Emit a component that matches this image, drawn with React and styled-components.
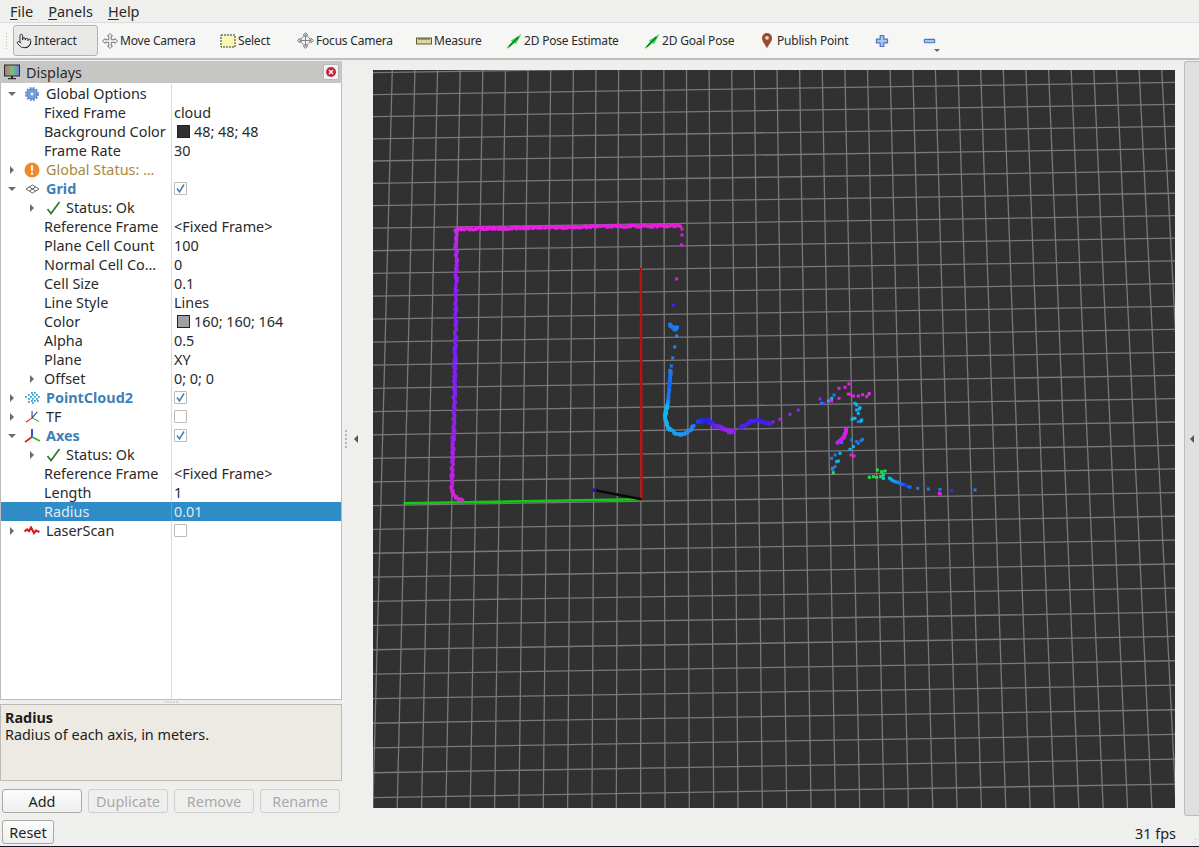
import React from "react";
import styled, { createGlobalStyle } from "styled-components";
import { Pointer } from "lucide-react";

const GlobalStyle = createGlobalStyle`
  html, body { margin: 0; padding: 0; background: #efefef; }
  body { font-family: "Noto Sans", "Open Sans", sans-serif; font-size: 14.4px; color: #2a2a2a; }
`;

const Window = styled.div`
  width: 1199px;
  height: 847px;
  display: flex;
  flex-direction: column;
  overflow: hidden;
  background: #efefee;
`;

const MenuBar = styled.div`
  height: 22px;
  display: flex;
  align-items: center;
  padding-left: 10px;
  gap: 15px;
  font-size: 14.5px;
  flex: none;
  u { text-underline-offset: 2px; }
`;

const Toolbar = styled.div`
  height: 38px;
  flex: none;
  box-sizing: border-box;
  display: flex;
  align-items: center;
  padding-left: 13px;
  background: #f6f6f5;
  border-top: 1px solid #dcdcdc;
  border-bottom: 2px solid #bdbdbd;
  position: relative;
  font-size: 12px;
  letter-spacing: -0.2px;
`;

const Grip = styled.div`
  position: absolute;
  left: 5px;
  top: 9px;
  width: 4px;
  height: 19px;
  background-image: radial-gradient(#b5b5b5 0.7px, transparent 0.8px);
  background-size: 3px 3px;
`;

const ToolButton = styled.div`
  width: ${(p) => p.$w}px;
  height: 31px;
  flex: none;
  box-sizing: border-box;
  display: flex;
  align-items: center;
  gap: 2px;
  padding-left: ${(p) => (p.$active ? 2 : 3)}px;
  white-space: nowrap;
  border: 1px solid ${(p) => (p.$active ? "#b2b2b2" : "transparent")};
  border-radius: 3px;
  background: ${(p) => (p.$active ? "#e9e9e8" : "transparent")};
`;

const MoreArrow = styled.div`
  width: 0;
  height: 0;
  margin: 20px 0 0 -4px;
  border-left: 3px solid transparent;
  border-right: 3px solid transparent;
  border-top: 3px solid #666;
`;

const Main = styled.div`
  flex: 1;
  min-height: 0;
  display: flex;
  padding-top: 1px;
`;

const Dock = styled.div`
  width: 342px;
  flex: none;
  display: flex;
  flex-direction: column;
`;

const DockTitle = styled.div`
  height: 22px;
  flex: none;
  display: flex;
  align-items: center;
  padding: 0 3px 0 4px;
  gap: 6px;
  background: #c6c6c5;
`;

const CloseButton = styled.div`
  margin-left: auto;
  width: 16px;
  height: 16px;
  box-sizing: border-box;
  display: flex;
  align-items: center;
  justify-content: center;
  background: #f4f4f4;
  border: 1px solid #b8b8b8;
  border-radius: 2px;
`;

const Tree = styled.div`
  height: 617px;
  flex: none;
  box-sizing: border-box;
  display: flex;
  flex-direction: column;
  background: #fff;
  border: 1px solid #bcbcbc;
  border-top: 0;
  padding-top: 1px;
`;

const Row = styled.div`
  height: 19px;
  flex: none;
  display: grid;
  grid-template-columns: 171px 1fr;
  background: ${(p) => (p.$selected ? "#308cc6" : "transparent")};
  color: ${(p) => (p.$selected ? "#dfeaf4" : "#2a2a2a")};
`;

const NameCell = styled.div`
  display: flex;
  align-items: center;
  box-sizing: border-box;
  padding-left: ${(p) => p.$indent}px;
  border-right: 1px solid ${(p) => (p.$selected ? "#5aa3d2" : "#dcdcdc")};
  white-space: nowrap;
  overflow: hidden;
`;

const ValueCell = styled.div`
  display: flex;
  align-items: center;
  padding-left: 2px;
  white-space: nowrap;
`;

const Filler = styled.div`
  flex: 1;
  width: 171px;
  box-sizing: border-box;
  border-right: 1px solid #dcdcdc;
`;

const ArrowSlot = styled.div`
  width: ${(p) => p.$w}px;
  flex: none;
  display: flex;
  justify-content: center;
`;

const Caret = styled.div`
  width: 0;
  height: 0;
  ${(p) =>
    p.$open
      ? `border-left: 4px solid transparent; border-right: 4px solid transparent; border-top: 4px solid #6c6c6c;`
      : `border-top: 4px solid transparent; border-bottom: 4px solid transparent; border-left: 4px solid #6c6c6c;`}
`;

const IconSlot = styled.div`
  width: ${(p) => p.$w}px;
  margin-left: ${(p) => p.$ml}px;
  flex: none;
  display: flex;
  align-items: center;
  justify-content: center;
`;

const Label = styled.span`
  margin-left: ${(p) => p.$ml || 0}px;
  font-weight: ${(p) => (p.$bold ? 700 : 400)};
  color: ${(p) => p.$color || "inherit"};
`;

const Check = styled.div`
  width: 13px;
  height: 13px;
  box-sizing: border-box;
  border: 1px solid #bababa;
  border-radius: 1px;
  display: flex;
  align-items: center;
  justify-content: center;
  background: #fff;
`;

const Swatch = styled.div`
  width: 13px;
  height: 13px;
  margin: 0 4px 0 3px;
  box-sizing: border-box;
  border: 1px solid #222;
  background: ${(p) => p.$c};
`;

const Splitter = styled.div`
  height: 4px;
  flex: none;
  background-image: radial-gradient(#b8b8b8 0.6px, transparent 0.7px);
  background-size: 3px 4px;
  background-position: center;
  background-repeat: repeat-x;
  background-clip: content-box;
  padding: 0 163px;
`;

const Description = styled.div`
  height: 77px;
  flex: none;
  box-sizing: border-box;
  padding: 4px 4px;
  background: #ede9e3;
  border: 1px solid #bcbab6;
  line-height: 17px;
  color: #1d1d1d;
  b { display: block; }
`;

const ButtonRow = styled.div`
  display: flex;
  gap: 6px;
  padding: 8px 2px 0;
`;

const PushButton = styled.div`
  width: ${(p) => p.$w}px;
  height: 24px;
  box-sizing: border-box;
  display: flex;
  align-items: center;
  justify-content: center;
  border: 1px solid ${(p) => (p.$disabled ? "#cfcfcf" : "#a8a8a8")};
  border-radius: 3px;
  background: ${(p) => (p.$disabled ? "#efefee" : "linear-gradient(#fbfbfb, #efefef)")};
  color: ${(p) => (p.$disabled ? "#a9a9a9" : "#1d1d1d")};
`;

const CollapseGutter = styled.div`
  width: 31px;
  flex: none;
  display: flex;
  align-items: center;
  gap: 7px;
  padding-left: 3px;
  box-sizing: border-box;
`;

const GutterDots = styled.div`
  width: 2px;
  height: 20px;
  background-image: radial-gradient(#b5b5b5 0.7px, transparent 0.8px);
  background-size: 2px 4px;
`;

const LeftArrow = styled.div`
  width: 0;
  height: 0;
  border-top: 4px solid transparent;
  border-bottom: 4px solid transparent;
  border-right: 4px solid #555;
`;

const Viewport = styled.svg`
  width: 802px;
  height: 738px;
  flex: none;
  margin-top: 9px;
  display: block;
  background: #313131;
`;

const RightHandle = styled.div`
  width: 15px;
  flex: none;
  margin-left: 9px;
  box-sizing: border-box;
  display: flex;
  align-items: center;
  justify-content: center;
  background: #dfdfde;
  border: 1px solid #bcbcbc;
  border-right: 0;
  border-radius: 3px 0 0 3px;
`;

const StatusBar = styled.div`
  height: 31px;
  flex: none;
  box-sizing: border-box;
  display: flex;
  align-items: flex-start;
  padding: 4px 0 0 2px;
  border-bottom: 1px solid #1d0f1d;
  position: relative;
`;

const Fps = styled.div`
  margin-left: auto;
  margin-right: 23px;
  margin-top: 4px;
  color: #1d1d1d;
`;

const SizeGrip = styled.div`
  position: absolute;
  right: 1px;
  bottom: 1px;
  width: 10px;
  height: 10px;
  background-image: radial-gradient(#c2c2c2 0.8px, transparent 0.9px);
  background-size: 3px 3px;
  clip-path: polygon(100% 0, 100% 100%, 0 100%);
`;

/* toolbar icons */
const HandIcon = () => <Pointer size={16} strokeWidth={1.4} color="#222" />;

const MoveIcon = () => (
  <svg width="16" height="16" viewBox="0 0 16 16">
    <path
      d="M8 .5 10.5 3H9.3v3.7H13V5.5L15.5 8 13 10.5V9.3H9.3V13h1.2L8 15.500 5.500 13h1.200V9.300H3v1.200L.5 8 3 5.500v1.200h3.700V3H5.500z"
      fill="#f2f2f2"
      stroke="#7a7a7a"
      strokeWidth="1"
    />
  </svg>
);

const SelectIcon = () => (
  <svg width="16" height="16" viewBox="0 0 16 16">
    <rect x="1" y="2" width="14" height="12" fill="#fbf8b4" stroke="#333" strokeDasharray="2 1" />
  </svg>
);

const FocusIcon = () => (
  <svg width="17" height="17" viewBox="0 0 17 17" fill="none" stroke="#858585">
    <path d="M8.500 .5 11 3H6zM8.500 16.500 11 14H6zM.5 8.500 3 6v5zM16.500 8.500 14 6v5z" fill="#e8e8e8" />
    <circle cx="8.500" cy="8.500" r="4.500" fill="#f2f2f2" />
    <path d="M8.500 3v11M3 8.500h11" />
  </svg>
);

const MeasureIcon = () => (
  <svg width="16" height="16" viewBox="0 0 16 16">
    <rect x=".5" y="5" width="15" height="6" fill="#dcd89a" stroke="#5c5a3c" />
    <path d="M3 5v2M5 5v2M7 5v2M9 5v2M11 5v2M13 5v2" stroke="#5c5a3c" />
  </svg>
);

const PoseIcon = () => (
  <svg width="16" height="16" viewBox="0 0 16 16">
    <path d="M.5 15 6 9 5 7.500 15.500 1 10 11 8.500 10 2 15.500z" fill="#39d353" />
    <path d="M3 13.500 12.500 4" stroke="#116b2a" strokeWidth="1.300" />
  </svg>
);

const PinIcon = () => (
  <svg width="16" height="17" viewBox="0 0 16 17">
    <path d="M8 16.500C6.500 12.500 3 10 3 6a5 5 0 0 1 10 0c0 4-3.500 6.500-5 10.500z" fill="#9c4a2c" />
    <circle cx="8" cy="5.800" r="1.900" fill="#e8d8cc" />
  </svg>
);

const PlusIcon = () => (
  <svg width="16" height="16" viewBox="0 0 16 16">
    <path
      d="M6.200 2.500h3.600v3.700h3.700v3.600H9.800v3.700H6.200V9.800H2.500V6.200h3.700z"
      fill="#a9c5ee"
      stroke="#4b77b6"
      strokeWidth="1.200"
      strokeLinejoin="round"
    />
  </svg>
);

const MinusIcon = () => (
  <svg width="16" height="16" viewBox="0 0 16 16">
    <rect x="2.500" y="6.200" width="11" height="3.600" rx=".8" fill="#a9c5ee" stroke="#4b77b6" strokeWidth="1.200" />
  </svg>
);

/* tree icons */
const MonitorIcon = () => (
  <svg width="16" height="16" viewBox="0 0 16 16">
    <defs>
      <linearGradient id="screen" x1="0" x2="1" y1="0" y2="0">
        <stop offset="0" stopColor="#c46a78" />
        <stop offset=".5" stopColor="#79c07c" />
        <stop offset="1" stopColor="#6c7fd0" />
      </linearGradient>
    </defs>
    <rect x=".5" y="1" width="15" height="11" fill="url(#screen)" stroke="#2b2b2b" />
    <path d="M7 12h2v2H7zM4 14h8v1.200H4z" fill="#2b2b2b" />
  </svg>
);

const CloseIcon = () => (
  <svg width="12" height="12" viewBox="0 0 12 12">
    <circle cx="6" cy="6" r="5" fill="#c0233f" />
    <path d="M4 4l4 4M8 4l-4 4" stroke="#fff" strokeWidth="1.300" />
  </svg>
);

const GearIcon = () => (
  <svg width="14" height="14" viewBox="0 0 14 14">
    <circle cx="7" cy="7" r="5" fill="#7ba4dd" stroke="#4c7cc0" strokeWidth="1" />
    <circle cx="7" cy="7" r="6" fill="none" stroke="#5f8fd2" strokeWidth="2" strokeDasharray="1.900 1.240" />
    <circle cx="7" cy="7" r="2.200" fill="#dfeafa" stroke="#4c7cc0" strokeWidth=".8" />
  </svg>
);

const WarnIcon = () => (
  <svg width="16" height="16" viewBox="0 0 16 16">
    <circle cx="8" cy="8" r="7.500" fill="#f08a2c" />
    <rect x="7" y="3" width="2" height="6.500" rx=".8" fill="#fff4e6" />
    <circle cx="8" cy="11.800" r="1.200" fill="#fff4e6" />
  </svg>
);

const GridIcon = () => (
  <svg width="15" height="10" viewBox="0 0 15 10" fill="none" stroke="#555" strokeWidth=".9">
    <path d="M7.500 1 14 5 7.500 9 1 5zM4.200 3l6.500 4M10.800 3 4.300 7" />
  </svg>
);

const OkIcon = () => (
  <svg width="15" height="14" viewBox="0 0 15 14" fill="none">
    <path d="M1.500 8 5 12.500 13.500 1" stroke="#2f7d32" strokeWidth="1.800" />
  </svg>
);

const CloudIcon = () => (
  <svg width="15" height="14" viewBox="0 0 15 14" fill="#36a3d9">
    {[[6, 1], [9, 1], [3, 3], [7, 3], [11, 3], [0, 5], [5, 5], [9, 5], [13, 5], [3, 7], [7, 7], [11, 7], [6, 9], [9, 9], [12, 9], [7, 11], [3, 10]].map(([x, y]) => (
      <rect key={`${x}-${y}`} x={x} y={y} width="1.800" height="1.800" />
    ))}
  </svg>
);

const AxesIcon = ({ small }) => (
  <svg width={small ? 15 : 17} height={small ? 14 : 16} viewBox="0 0 17 16" fill="none" strokeWidth={small ? 1.200 : 1.800}>
    <path d="M8 9V1" stroke="#2436d8" />
    <path d="M8 9 1 14" stroke="#d92323" />
    <path d="M8 9l8 4" stroke={small ? "#2aa52a" : "#28b828"} />
    {small && <path d="M8 9l6-7" stroke="#333" />}
  </svg>
);

const LaserIcon = () => (
  <svg width="16" height="10" viewBox="0 0 16 10" fill="none">
    <path d="M.5 5.500 3 3.500l2 1.500 2-3.500 3 5.500 2-2.500 3.500 1.500" stroke="#d81f1f" strokeWidth="2.200" />
  </svg>
);

const TickIcon = () => (
  <svg width="11" height="11" viewBox="0 0 11 11" fill="none">
    <path d="M2 5.500 4.500 9 9 1.500" stroke="#3f7fb3" strokeWidth="1.500" />
  </svg>
);

const BLUE = "#3f7fb5";

const rows = [
  { kind: "group", open: true, icon: <GearIcon />, label: "Global Options" },
  { label: "Fixed Frame", value: "cloud" },
  { label: "Background Color", swatch: "#303030", value: "48; 48; 48" },
  { label: "Frame Rate", value: "30" },
  { kind: "group", icon: <WarnIcon />, label: "Global Status: …", color: "#a68a3c" },
  { kind: "group", open: true, icon: <GridIcon />, label: "Grid", bold: true, color: BLUE, check: true },
  { kind: "status", label: "Status: Ok" },
  { label: "Reference Frame", value: "<Fixed Frame>" },
  { label: "Plane Cell Count", value: "100" },
  { label: "Normal Cell Co…", value: "0" },
  { label: "Cell Size", value: "0.1" },
  { label: "Line Style", value: "Lines" },
  { label: "Color", swatch: "#a0a0a4", value: "160; 160; 164" },
  { label: "Alpha", value: "0.5" },
  { label: "Plane", value: "XY" },
  { kind: "nested", label: "Offset", value: "0; 0; 0" },
  { kind: "group", icon: <CloudIcon />, label: "PointCloud2", bold: true, color: BLUE, check: true },
  { kind: "group", icon: <AxesIcon small />, label: "TF", check: false },
  { kind: "group", open: true, icon: <AxesIcon />, label: "Axes", bold: true, color: BLUE, check: true },
  { kind: "status", label: "Status: Ok" },
  { label: "Reference Frame", value: "<Fixed Frame>" },
  { label: "Length", value: "1" },
  { label: "Radius", value: "0.01", selected: true },
  { kind: "group", icon: <LaserIcon />, label: "LaserScan", check: false },
];

const TreeRow = ({ row }) => {
  const { kind, open, icon, label, color, bold, check, value, swatch, selected } = row;
  let name;
  if (kind === "group") {
    name = (
      <NameCell $indent={0} $selected={selected}>
        <ArrowSlot $w={22}><Caret $open={open} /></ArrowSlot>
        <IconSlot $w={18} $ml={0}>{icon}</IconSlot>
        <Label $ml={5} $bold={bold} $color={color}>{label}</Label>
      </NameCell>
    );
  } else if (kind === "status") {
    name = (
      <NameCell $indent={22}>
        <ArrowSlot $w={18}><Caret /></ArrowSlot>
        <IconSlot $w={16} $ml={4}><OkIcon /></IconSlot>
        <Label $ml={5}>{label}</Label>
      </NameCell>
    );
  } else if (kind === "nested") {
    name = (
      <NameCell $indent={22}>
        <ArrowSlot $w={18}><Caret /></ArrowSlot>
        <Label $ml={3}>{label}</Label>
      </NameCell>
    );
  } else {
    name = <NameCell $indent={43} $selected={selected}>{label}</NameCell>;
  }
  return (
    <Row $selected={selected}>
      {name}
      <ValueCell>
        {swatch && <Swatch $c={swatch} />}
        {value}
        {check !== undefined && <Check>{check && <TickIcon />}</Check>}
      </ValueCell>
    </Row>
  );
};

/* 3D view: grid is projected by hand from measured line positions */
const gridLines = () => {
  const lines = [];
  for (let i = -1; i < 35; i++) {
    const top = 392.3 + 22.63 * i;
    const bottom = top + 0.0757 * (top - 649);
    lines.push([top, 70, bottom, 808]);
  }
  for (let n = -1; n < 34; n++) {
    const left = (21.74 * n + 72.7) / (1 - 0.002065 * n);
    const slope = 0.0152 + (0.0018 * (left - 72)) / 725;
    lines.push([373, left, 1175, left - slope * 802]);
  }
  return lines;
};

const hex = (c) => [1, 3, 5].map((k) => parseInt(c.slice(k, k + 2), 16));
const mix = (a, b, t) => {
  const [x, y] = [hex(a), hex(b)];
  return `rgb(${x.map((v, k) => Math.round(v + (y[k] - v) * t)).join(",")})`;
};

// cheap repeatable noise, so the scan looks rough but stays the same each load
const noise = (k) => {
  const s = Math.sin(k * 12.9898) * 43758.5453;
  return s - Math.floor(s) - 0.5;
};

const trail = (pts, step, jitter, size, seed) => {
  const out = [];
  let k = seed;
  for (let p = 0; p < pts.length - 1; p++) {
    const [x0, y0, c0] = pts[p];
    const [x1, y1, c1] = pts[p + 1];
    const count = Math.max(1, Math.round(Math.hypot(x1 - x0, y1 - y0) / step));
    for (let s = 0; s < count; s++) {
      const t = s / count;
      k++;
      out.push({
        x: x0 + (x1 - x0) * t + noise(k) * jitter,
        y: y0 + (y1 - y0) * t + noise(k + 0.37) * jitter,
        c: mix(c0, c1, t),
        s: size,
      });
    }
  }
  return out;
};

const MAG = "#e81ee6";
const VIO = "#8a1ff5";
const CYAN = "#12b4f2";
const AZU = "#1f7cf0";
const DEEP = "#2222f0";
const LIME = "#22e04a";

const spot = (c) => (list) => list.map(([x, y]) => ({ x: 640 + x / 3, y: 360 + y / 3, c, s: 3 }));

const scanPoints = () => [
  ...trail([[456, 229, "#c82cec"], [456.5, 290, VIO], [455, 360, "#7a20f8"], [454, 420, "#8f20f2"], [452, 470, "#b820ea"], [452, 493, "#d020e0"], [457, 498, "#d622dc"], [464, 501, "#dd26d6"]], 1.2, 2.6, 3, 10),
  ...trail([[458, 229, MAG], [540, 227.500, "#ee1ee6"], [610, 226.500, MAG], [681, 225.500, "#e81ed8"]], 1.1, 2.4, 3, 900),
  ...trail([[682, 229, "#e020d0"], [683, 230, "#e020d0"]], 2, 0, 3, 3),
  ...[[682, 235, "#d81fd8"], [681.500, 245, "#d81fd8"], [676.700, 279, "#d61fdc"], [673.300, 305, "#2a2af0"], [676.700, 336, "#1f90f0"], [674.700, 347, "#1f8cf0"], [672.700, 358, "#1f80f0"], [671.300, 366, "#1f78f0"]].map(([x, y, c]) => ({ x, y, c, s: 3 })),
  ...trail([[670, 324, AZU], [673, 328, AZU], [677, 328, AZU], [674, 331, AZU]], 1, 1.5, 3.4, 70),
  ...trail([[670.500, 370, AZU], [669.500, 385, "#1568f0"], [668, 402, AZU], [667, 406, CYAN], [665, 418, CYAN], [668.300, 428, CYAN], [675, 433, "#14a0f0"], [682, 435, "#1f98f0"], [691, 429, "#2a86f0"], [694, 425, AZU]], 0.7, 1.8, 3, 200),
  ...trail([[696.700, 421.700, "#2244f0"], [706.700, 420, DEEP], [715, 426, "#5c20f0"], [722, 428, VIO], [730, 431.700, "#a020ee"], [735, 431, "#9020f0"]], 0.6, 2.6, 3, 400),
  ...trail([[740, 428, "#5a20f0"], [752, 421, "#4a20f0"], [758, 420, "#4220f0"], [768, 424, "#3a22f0"], [772, 423, "#5a20f0"]], 0.8, 2.2, 3, 500),
  ...[[773, 422, "#8420ee"], [780, 419.300, "#a820e6"], [790, 414.300, "#a420e6"], [798.300, 410, "#9020ee"]].map(([x, y, c]) => ({ x, y, c, s: 3 })),
  ...spot(MAG)([[627, 72], [597, 85], [615, 82], [632, 103], [640, 108], [655, 108], [668, 104], [688, 100], [680, 110], [597, 115], [575, 123], [633, 285], [642, 288], [625, 102], [686, 103]]),
  ...spot("#8a28f0")([[540, 117], [550, 130]]),
  ...spot(CYAN)([[575, 115], [565, 123], [645, 130], [660, 143], [650, 150], [655, 160], [640, 175], [665, 180], [645, 175], [630, 268], [600, 280], [590, 305], [595, 303], [640, 260], [578, 325], [650, 135], [658, 147], [636, 178], [662, 184]]),
  ...spot(AZU)([[582, 105], [545, 130], [668, 238], [650, 245], [655, 250], [635, 240], [605, 248], [585, 285], [575, 295], [585, 320], [578, 328], [655, 185], [663, 242]]),
  ...trail([[620, 205, MAG], [612, 232, "#d020ea"], [590, 250, "#c020ee"]], 1.2, 2.4, 3, 620).map((d) => ({ ...d, x: 640 + d.x / 3, y: 360 + d.y / 3 })),
  ...spot(LIME)([[580, 338], [712, 330], [725, 335], [735, 333], [688, 352], [700, 350], [710, 352], [722, 350]]),
  ...spot("#18d8b0")([[730, 345], [730, 355]]),
  ...trail([[748, 355, CYAN], [760, 362, "#18a0f0"], [780, 370, AZU], [800, 378, "#2038f0"], [815, 383, AZU]], 4, 2, 3, 700).map((d) => ({ ...d, x: 640 + d.x / 3, y: 360 + d.y / 3 })),
  ...spot(AZU)([[833, 385], [865, 387], [900, 388], [1005, 390]]),
  ...spot("#3f2af0")([[935, 392]]),
  ...spot(MAG)([[898, 400], [901, 402]]),
];

const GridAndScan = () => (
  <Viewport viewBox="373 70 802 738">
    <g stroke="#7a787d" strokeWidth="1.3">
      {gridLines().map(([x1, y1, x2, y2]) => (
        <line key={`${x1}-${y1}`} x1={x1} y1={y1} x2={x2} y2={y2} />
      ))}
    </g>
    <line x1="403.500" y1="503.300" x2="641" y2="499.200" stroke="#10cc10" strokeWidth="2.400" />
    <line x1="640.800" y1="268" x2="641.600" y2="499" stroke="#b81212" strokeWidth="2.500" />
    <line x1="594" y1="490" x2="641.500" y2="499.300" stroke="#080808" strokeWidth="2.400" />
    <rect x="592.500" y="488.500" width="3.500" height="3.500" fill="#1414e0" />
    {scanPoints().map((d, k) => (
      <rect key={k} x={d.x - d.s / 2} y={d.y - d.s / 2} width={d.s} height={d.s} fill={d.c} />
    ))}
  </Viewport>
);

const tools = [
  { name: "Interact", icon: <HandIcon />, w: 85, active: true },
  { name: "Move Camera", icon: <MoveIcon />, w: 118 },
  { name: "Select", icon: <SelectIcon />, w: 77 },
  { name: "Focus Camera", icon: <FocusIcon />, w: 119 },
  { name: "Measure", icon: <MeasureIcon />, w: 90 },
  { name: "2D Pose Estimate", icon: <PoseIcon />, w: 138 },
  { name: "2D Goal Pose", icon: <PoseIcon />, w: 115 },
  { name: "Publish Point", icon: <PinIcon />, w: 115 },
  { icon: <PlusIcon />, w: 48 },
  { icon: <MinusIcon />, w: 20 },
];

export default function App() {
  return (
    <Window>
      <GlobalStyle />
      <MenuBar>
        <span><u>F</u>ile</span>
        <span><u>P</u>anels</span>
        <span><u>H</u>elp</span>
      </MenuBar>
      <Toolbar>
        <Grip />
        {tools.map((t, k) => (
          <ToolButton key={k} $w={t.w} $active={t.active}>
            {t.icon}
            {t.name}
          </ToolButton>
        ))}
        <MoreArrow />
      </Toolbar>
      <Main>
        <Dock>
          <DockTitle>
            <MonitorIcon />
            Displays
            <CloseButton><CloseIcon /></CloseButton>
          </DockTitle>
          <Tree>
            {rows.map((row, k) => (
              <TreeRow key={k} row={row} />
            ))}
            <Filler />
          </Tree>
          <Splitter />
          <Description>
            <b>Radius</b>
            Radius of each axis, in meters.
          </Description>
          <ButtonRow>
            <PushButton $w={80}>Add</PushButton>
            <PushButton $w={80} $disabled>Duplicate</PushButton>
            <PushButton $w={80} $disabled>Remove</PushButton>
            <PushButton $w={80} $disabled>Rename</PushButton>
          </ButtonRow>
        </Dock>
        <CollapseGutter>
          <GutterDots />
          <LeftArrow />
        </CollapseGutter>
        <GridAndScan />
        <RightHandle>
          <LeftArrow />
        </RightHandle>
      </Main>
      <StatusBar>
        <PushButton $w={52}>Reset</PushButton>
        <Fps>31 fps</Fps>
        <SizeGrip />
      </StatusBar>
    </Window>
  );
}
